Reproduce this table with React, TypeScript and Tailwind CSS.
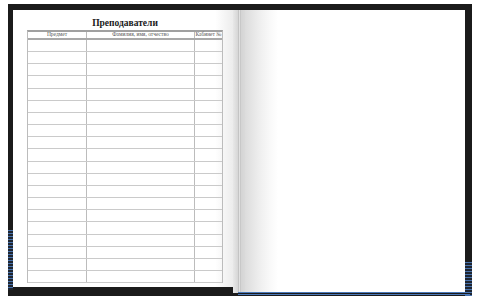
import React from "react";

const rows = Array.from({ length: 20 }, (_, i) => i);

export default function App() {
  return (
    <div className="w-[480px] h-[304px] bg-white pt-[4px] pl-[8px] overflow-hidden">
      <div className="relative w-[464px] h-[292px] bg-[#1b1b1b] flex items-start pt-[6px] pl-[5px]">
        {/* left stripes */}
        <div className="absolute left-0 top-[226px] w-[5px] h-[60px] bg-[repeating-linear-gradient(180deg,#4872ad_0px,#4872ad_1px,#1e2530_1px,#1e2530_3px)]" />
        {/* right stripes */}
        <div className="absolute right-0 top-[258px] w-[7px] h-[34px] bg-[repeating-linear-gradient(180deg,#4872ad_0px,#4872ad_1px,#1e2530_1px,#1e2530_3px)]" />
        {/* bottom stripe right */}
        <div className="absolute left-[230px] right-[2px] bottom-[1px] h-[3px] bg-[repeating-linear-gradient(180deg,#4a78b8_0px,#4a78b8_1px,#1b1b1b_1px,#1b1b1b_2px)]" />

        {/* left page */}
        <div className="relative w-[220px] h-[277px] flex flex-col pl-[14px] pr-[10px] bg-[linear-gradient(90deg,#ffffff_0%,#ffffff_92%,#ececec_100%)]">
          <div className="h-[20px] flex items-end justify-center pb-[2px]">
            <span className="text-[9.5px] leading-none font-bold text-[#1a1a1a] [font-family:'Liberation_Serif','DejaVu_Serif',serif]">
              Преподаватели
            </span>
          </div>
          <div className="w-[196px] flex flex-col border-t-2 border-[#a0a0a0] border-l border-r border-l-[#bcbcbc] border-r-[#bcbcbc]">
            <div className="h-[8px] flex border-b-2 border-[#a8a8a8] text-[5.5px] leading-none text-[#555] [font-family:'Liberation_Serif',serif]">
              <div className="w-[59px] flex items-center justify-center border-r border-[#bcbcbc]">Предмет</div>
              <div className="w-[108px] flex items-center justify-center border-r border-[#bcbcbc]">Фамилия, имя, отчество</div>
              <div className="flex-1 flex items-center justify-center whitespace-nowrap">Кабинет №</div>
            </div>
            <div className="h-[243px] flex flex-col">
              {rows.map((r) => (
                <div key={r} className="flex-1 flex border-b border-[#cacaca]">
                  <div className="w-[59px] border-r border-[#bcbcbc]" />
                  <div className="w-[108px] border-r border-[#bcbcbc]" />
                  <div className="flex-1" />
                </div>
              ))}
            </div>
          </div>
        </div>

        {/* spine */}
        <div className="w-[12px] h-[283px] flex">
          <div className="w-[5px] h-full bg-[linear-gradient(90deg,#e8e8e8,#d6d6d6)]" />
          <div className="w-[1px] h-full bg-[#c4c4c4]" />
          <div className="w-[1px] h-full bg-[#e2e2e2]" />
          <div className="w-[1px] h-full bg-[#c8c8c8]" />
          <div className="flex-1 h-full bg-[linear-gradient(90deg,#d4d4d4,#dadada)]" />
        </div>

        {/* right page */}
        <div className="w-[220px] h-[283px] bg-[linear-gradient(90deg,#dcdcdc_0%,#ededed_6%,#f8f8f8_11%,#ffffff_15%,#ffffff_100%)]" />
      </div>
    </div>
  );
}
